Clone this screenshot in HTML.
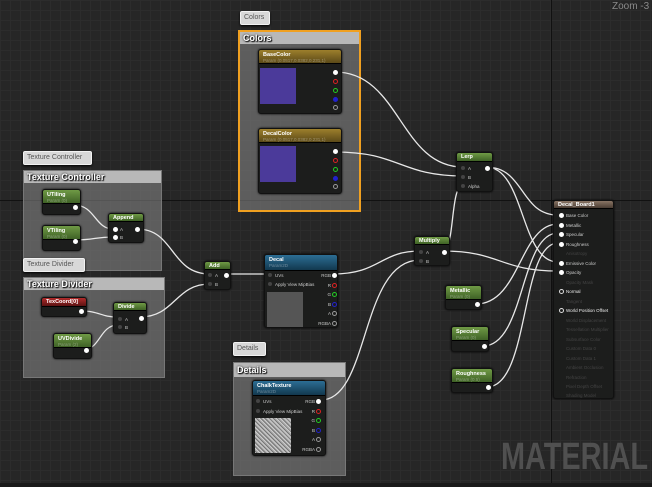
<!DOCTYPE html>
<html><head><meta charset="utf-8"><style>
*{margin:0;padding:0;box-sizing:border-box}
body{width:652px;height:487px;overflow:hidden;background:#262626;font-family:"Liberation Sans",sans-serif;position:relative}
.grid{position:absolute;inset:0;background-image:linear-gradient(#2c2c2c 1px,transparent 1px),linear-gradient(90deg,#2c2c2c 1px,transparent 1px);background-size:10px 10px}
.abs{position:absolute}
.tag{position:absolute;background:#d8d8d8;border:1px solid #f2f2f2;border-radius:2px;color:#555;font-size:7px;padding:2px 3px;line-height:8px;box-shadow:0 1px 2px #000}
.box{position:absolute;background:rgba(130,130,130,.6);border:1px solid #777}
.box .h{background:#b8b8b8;color:#fff;font-weight:bold;font-size:9px;line-height:12px;padding-left:3px;text-shadow:0 0 2px #000,1px 1px 1px #000}
.node{position:absolute;background:#1c1d1c;border:1px solid #111;border-radius:3px;box-shadow:0 0 2px #000;overflow:hidden}
.nh{height:14px;color:#fff;font-size:5.5px;font-weight:bold;padding:2px 0 0 4px;line-height:6px;border-bottom:1px solid #000}
.nh i{display:block;font-style:normal;font-weight:normal;color:rgba(255,255,255,.35);font-size:4.5px}
.g{background:linear-gradient(#6f9a45,#3f6226)}
.y{background:linear-gradient(#9d7f2c,#5c4a18)}
.b{background:linear-gradient(#2c6e95,#12384f)}
.r{background:linear-gradient(#b02a2a,#5c1212)}
.p{position:absolute;width:5px;height:5px;border-radius:50%;background:#fff}
.pd{position:absolute;width:4px;height:4px;border-radius:50%;background:#444}
.t{position:absolute;color:#ccc;font-size:4.5px;line-height:5px;white-space:nowrap}
.tr{position:absolute;color:#ccc;font-size:4.5px;line-height:5px;text-align:right}
.o{position:absolute;width:5px;height:5px;border-radius:50%;border:1px solid}
</style></head><body>
<div class="grid"></div>
<div class="abs" style="left:551px;top:0;width:1px;height:487px;background:#111"></div>
<div class="abs" style="left:0;top:200px;width:652px;height:1px;background:#111"></div>
<div class="abs" style="left:0;top:483px;width:652px;height:4px;background:#1a1a1a"></div>
<div class="abs" style="left:612px;top:1px;color:#8a8a8a;font-size:10px">Zoom -3</div>
<div class="abs" style="left:501px;top:436px;color:#505050;font-size:38px;font-weight:bold;white-space:nowrap;transform:scaleX(0.76);transform-origin:0 0">MATERIAL</div>

<!-- comment boxes -->
<div class="tag" style="left:240px;top:11px;width:30px">Colors</div>
<div class="box" style="left:238px;top:30px;width:123px;height:182px;border:2px solid #f0a020"><div class="h">Colors</div></div>
<div class="tag" style="left:23px;top:151px;width:69px">Texture Controller</div>
<div class="box" style="left:23px;top:170px;width:139px;height:101px"><div class="h">Texture Controller</div></div>
<div class="tag" style="left:23px;top:258px;width:62px">Texture Divider</div>
<div class="box" style="left:23px;top:277px;width:142px;height:101px"><div class="h">Texture Divider</div></div>
<div class="tag" style="left:233px;top:342px;width:33px">Details</div>
<div class="box" style="left:233px;top:362px;width:113px;height:114px"><div class="h" style="line-height:14px">Details</div></div>

<svg class="abs" style="left:0;top:0" width="652" height="487" fill="none" stroke="#e8e8e8" stroke-width="1.3">
<path d="M335 72C400 72 400 167 463 167"/>
<path d="M335 152C400 152 400 176 463 176"/>
<path d="M486 167C525 167 520 215 558 215"/>
<path d="M486 167C525 167 520 262 558 262"/>
<path d="M443 251C455 251 450 185 463 185"/>
<path d="M443 251C500 251 500 271 558 271"/>
<path d="M74 205C95 205 95 229 113 229"/>
<path d="M74 240C95 240 95 237 113 237"/>
<path d="M137 229C175 229 170 274 210 274"/>
<path d="M140 317C175 317 175 284 210 284"/>
<path d="M81 311C100 311 100 317 118 317"/>
<path d="M85 349C100 349 100 325 118 325"/>
<path d="M225 274L268 274"/>
<path d="M333 274C380 274 380 251 420 251"/>
<path d="M321 400C370 400 360 260 420 260"/>
<path d="M476 304C520 304 520 224 558 224"/>
<path d="M483 346C525 346 520 233 558 233"/>
<path d="M487 387C530 387 520 243 558 243"/>
</svg>

<!-- BaseColor -->
<div class="node" style="left:258px;top:49px;width:84px;height:65px"><div class="nh y">BaseColor<i>Param (0.0517,0.0382,0.231,1)</i></div>
<div class="abs" style="left:1px;top:18px;width:36px;height:36px;background:#4b3a9a"></div>
<div class="p" style="left:74px;top:20px"></div><div class="o" style="left:74px;top:29px;border-color:#d22"></div><div class="o" style="left:74px;top:38px;border-color:#2c2"></div><div class="o" style="left:74px;top:47px;border-color:#22c;background:#22c"></div><div class="o" style="left:74px;top:55px;border-color:#999"></div></div>
<!-- DecalColor -->
<div class="node" style="left:258px;top:128px;width:84px;height:66px"><div class="nh y">DecalColor<i>Param (0.0517,0.0382,0.231,1)</i></div>
<div class="abs" style="left:1px;top:17px;width:36px;height:36px;background:#4b3a9a"></div>
<div class="p" style="left:74px;top:20px"></div><div class="o" style="left:74px;top:29px;border-color:#d22"></div><div class="o" style="left:74px;top:38px;border-color:#2c2"></div><div class="o" style="left:74px;top:47px;border-color:#22c;background:#22c"></div><div class="o" style="left:74px;top:55px;border-color:#999"></div></div>

<!-- UTiling/VTiling -->
<div class="node" style="left:42px;top:189px;width:39px;height:26px"><div class="nh g">UTiling<i>Param (0)</i></div><div class="p" style="left:30px;top:15px"></div></div>
<div class="node" style="left:42px;top:225px;width:39px;height:26px"><div class="nh g">VTiling<i>Param (0)</i></div><div class="p" style="left:30px;top:13px"></div></div>
<div class="node" style="left:108px;top:213px;width:36px;height:30px"><div class="nh g" style="height:8px;padding-top:1px">Append</div><div class="p" style="left:4px;top:13px"></div><div class="t" style="left:11px;top:13px">A</div><div class="p" style="left:4px;top:21px"></div><div class="t" style="left:11px;top:21px">B</div><div class="p" style="left:26px;top:13px"></div></div>
<!-- TexCoord etc -->
<div class="node" style="left:41px;top:297px;width:46px;height:20px"><div class="nh r" style="height:9px;padding-top:1px">TexCoord[0]</div><div class="p" style="left:37px;top:11px"></div></div>
<div class="node" style="left:53px;top:333px;width:39px;height:26px"><div class="nh g">UVDivide<i>Param (2)</i></div><div class="p" style="left:30px;top:14px"></div></div>
<div class="node" style="left:113px;top:302px;width:34px;height:32px"><div class="nh g" style="height:8px;padding-top:1px">Divide</div><div class="pd" style="left:4px;top:14px"></div><div class="t" style="left:11px;top:14px">A</div><div class="pd" style="left:4px;top:22px"></div><div class="t" style="left:11px;top:22px">B</div><div class="p" style="left:25px;top:13px"></div></div>
<div class="node" style="left:204px;top:261px;width:27px;height:29px"><div class="nh g" style="height:8px;padding-top:1px">Add</div><div class="pd" style="left:3px;top:11px"></div><div class="t" style="left:10px;top:11px">A</div><div class="pd" style="left:3px;top:20px"></div><div class="t" style="left:10px;top:20px">B</div><div class="p" style="left:19px;top:11px"></div></div>

<!-- Decal -->
<div class="node" style="left:264px;top:254px;width:74px;height:74px"><div class="nh b" style="height:16px">Decal<i>Param2D</i></div>
<div class="pd" style="left:3px;top:18px"></div><div class="t" style="left:10px;top:18px">UVs</div><div class="pd" style="left:3px;top:27px"></div><div class="t" style="left:10px;top:27px">Apply View MipBias</div>
<div class="abs" style="left:2px;top:37px;width:36px;height:35px;background:#555"></div>
<div class="tr" style="left:50px;top:18px;width:16px">RGB</div><div class="p" style="left:67px;top:18px"></div>
<div class="tr" style="left:50px;top:28px;width:16px">R</div><div class="o" style="left:67px;top:28px;border-color:#d22"></div>
<div class="tr" style="left:50px;top:37px;width:16px">G</div><div class="o" style="left:67px;top:37px;border-color:#2c2"></div>
<div class="tr" style="left:50px;top:47px;width:16px">B</div><div class="o" style="left:67px;top:47px;border-color:#22c"></div>
<div class="tr" style="left:50px;top:56px;width:16px">A</div><div class="o" style="left:67px;top:56px;border-color:#999"></div>
<div class="tr" style="left:45px;top:66px;width:21px">RGBA</div><div class="o" style="left:67px;top:66px;border-color:#999"></div></div>

<!-- ChalkTexture -->
<div class="node" style="left:252px;top:380px;width:74px;height:76px"><div class="nh b" style="height:15px">ChalkTexture<i>Param2D</i></div>
<div class="pd" style="left:3px;top:18px"></div><div class="t" style="left:10px;top:18px">UVs</div><div class="pd" style="left:3px;top:28px"></div><div class="t" style="left:10px;top:28px">Apply View MipBias</div>
<div class="abs" style="left:2px;top:37px;width:36px;height:35px;background:#9a9a9a;background-image:repeating-linear-gradient(45deg,#ccc 0 1px,#777 1px 2px,#aaa 2px 3px),repeating-linear-gradient(-30deg,rgba(0,0,0,.3) 0 1px,transparent 1px 3px)"></div>
<div class="tr" style="left:45px;top:18px;width:17px">RGB</div><div class="p" style="left:63px;top:18px"></div>
<div class="tr" style="left:45px;top:28px;width:17px">R</div><div class="o" style="left:63px;top:28px;border-color:#d22"></div>
<div class="tr" style="left:45px;top:37px;width:17px">G</div><div class="o" style="left:63px;top:37px;border-color:#2c2"></div>
<div class="tr" style="left:45px;top:47px;width:17px">B</div><div class="o" style="left:63px;top:47px;border-color:#22c"></div>
<div class="tr" style="left:45px;top:56px;width:17px">A</div><div class="o" style="left:63px;top:56px;border-color:#999"></div>
<div class="tr" style="left:40px;top:66px;width:22px">RGBA</div><div class="o" style="left:63px;top:66px;border-color:#999"></div></div>

<!-- Lerp / Multiply -->
<div class="node" style="left:456px;top:152px;width:37px;height:40px"><div class="nh g" style="height:9px;padding-top:1px">Lerp</div><div class="pd" style="left:4px;top:13px"></div><div class="t" style="left:11px;top:13px">A</div><div class="pd" style="left:4px;top:22px"></div><div class="t" style="left:11px;top:22px">B</div><div class="pd" style="left:4px;top:31px"></div><div class="t" style="left:11px;top:31px">Alpha</div><div class="p" style="left:28px;top:13px"></div></div>
<div class="node" style="left:414px;top:236px;width:36px;height:30px"><div class="nh g" style="height:8px;padding-top:1px">Multiply</div><div class="pd" style="left:4px;top:13px"></div><div class="t" style="left:11px;top:13px">A</div><div class="pd" style="left:4px;top:22px"></div><div class="t" style="left:11px;top:22px">B</div><div class="p" style="left:27px;top:13px"></div></div>
<div class="node" style="left:445px;top:285px;width:37px;height:25px"><div class="nh g">Metallic<i>Param (0)</i></div><div class="p" style="left:29px;top:16px"></div></div>
<div class="node" style="left:451px;top:326px;width:38px;height:26px"><div class="nh g">Specular<i>Param (0)</i></div><div class="p" style="left:30px;top:17px"></div></div>
<div class="node" style="left:451px;top:368px;width:42px;height:25px"><div class="nh g">Roughness<i>Param (0.5)</i></div><div class="p" style="left:34px;top:16px"></div></div>

<!-- Decal_Board1 -->
<div class="node" style="left:553px;top:200px;width:61px;height:199px"><div class="nh" style="height:8px;padding-top:1px;background:linear-gradient(#8a7565,#4a3d33)">Decal_Board1</div>
<div class="p" style="left:5px;top:12px"></div><div class="t" style="left:12px;top:12px">Base Color</div>
<div class="p" style="left:5px;top:22px"></div><div class="t" style="left:12px;top:22px">Metallic</div>
<div class="p" style="left:5px;top:31px"></div><div class="t" style="left:12px;top:31px">Specular</div>
<div class="p" style="left:5px;top:41px"></div><div class="t" style="left:12px;top:41px">Roughness</div>
<div class="t" style="left:12px;top:50px;color:#444">Anisotropy</div>
<div class="p" style="left:5px;top:60px"></div><div class="t" style="left:12px;top:60px">Emissive Color</div>
<div class="p" style="left:5px;top:69px"></div><div class="t" style="left:12px;top:69px">Opacity</div>
<div class="t" style="left:12px;top:79px;color:#444">Opacity Mask</div>
<div class="o" style="left:5px;top:88px;border-color:#ddd"></div><div class="t" style="left:12px;top:88px;color:#eee">Normal</div>
<div class="t" style="left:12px;top:98px;color:#444">Tangent</div>
<div class="o" style="left:5px;top:107px;border-color:#ddd"></div><div class="t" style="left:12px;top:107px;color:#eee">World Position Offset</div>
<div class="t" style="left:12px;top:117px;color:#444">World Displacement</div>
<div class="t" style="left:12px;top:126px;color:#444">Tessellation Multiplier</div>
<div class="t" style="left:12px;top:136px;color:#444">Subsurface Color</div>
<div class="t" style="left:12px;top:145px;color:#444">Custom Data 0</div>
<div class="t" style="left:12px;top:155px;color:#444">Custom Data 1</div>
<div class="t" style="left:12px;top:164px;color:#444">Ambient Occlusion</div>
<div class="t" style="left:12px;top:174px;color:#444">Refraction</div>
<div class="t" style="left:12px;top:183px;color:#444">Pixel Depth Offset</div>
<div class="t" style="left:12px;top:192px;color:#444">Shading Model</div>
</div>
</body></html>
